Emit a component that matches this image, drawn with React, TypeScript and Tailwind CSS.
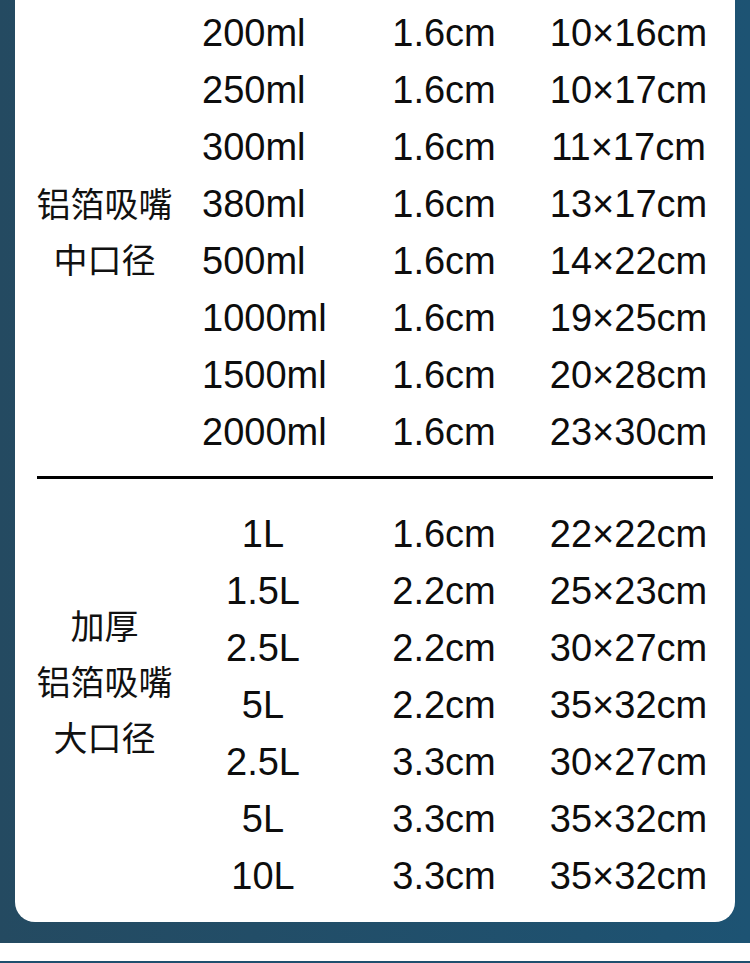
import React from "react";

const sec1 = [
  ["200ml", "1.6cm", "10×16cm"],
  ["250ml", "1.6cm", "10×17cm"],
  ["300ml", "1.6cm", "11×17cm"],
  ["380ml", "1.6cm", "13×17cm"],
  ["500ml", "1.6cm", "14×22cm"],
  ["1000ml", "1.6cm", "19×25cm"],
  ["1500ml", "1.6cm", "20×28cm"],
  ["2000ml", "1.6cm", "23×30cm"],
];

const sec2 = [
  ["1L", "1.6cm", "22×22cm"],
  ["1.5L", "2.2cm", "25×23cm"],
  ["2.5L", "2.2cm", "30×27cm"],
  ["5L", "2.2cm", "35×32cm"],
  ["2.5L", "3.3cm", "30×27cm"],
  ["5L", "3.3cm", "35×32cm"],
  ["10L", "3.3cm", "35×32cm"],
];

function Rows({ rows, firstLeft }: { rows: string[][]; firstLeft: boolean }) {
  return (
    <div className="flex flex-col">
      {rows.map((r, i) => (
        <div key={i} className="flex h-[57px] text-[38px] leading-[57px] text-[#0d0d0d] whitespace-nowrap">
          <div className={"ml-[30px] w-[122px] " + (firstLeft ? "text-left" : "text-center")}>{r[0]}</div>
          <div className="ml-[56px] w-[128px] text-center">{r[1]}</div>
          <div className="ml-[40px] w-[161px] text-center">{r[2]}</div>
        </div>
      ))}
    </div>
  );
}

export default function App() {
  return (
    <div
      className="w-[750px] h-[963px] flex flex-col bg-white overflow-hidden"
      style={{ fontFamily: '"Liberation Sans", Arial, "Noto Sans CJK SC", sans-serif' }}
    >
      <div className="bg-gradient-to-r from-[#244a61] to-[#1d5373] px-[15px] pb-[21px]">
        <div className="bg-white rounded-b-[20px] pt-[5px] pb-[17px] px-[22px]">
          <div className="flex">
            <div className="w-[135px] shrink-0 whitespace-nowrap flex flex-col items-center pt-[170px] text-[34px] leading-[56px] text-[#111]" style={{ fontFamily: '"Noto Sans CJK SC", sans-serif' }}>
              <div>铝箔吸嘴</div>
              <div>中口径</div>
            </div>
            <Rows rows={sec1} firstLeft={true} />
          </div>
          <div className="mt-[15px] h-[3px] bg-black" />
          <div className="flex mt-[27px]">
            <div className="w-[135px] shrink-0 whitespace-nowrap flex flex-col items-center pt-[91px] text-[34px] leading-[56px] text-[#111]" style={{ fontFamily: '"Noto Sans CJK SC", sans-serif' }}>
              <div>加厚</div>
              <div>铝箔吸嘴</div>
              <div>大口径</div>
            </div>
            <Rows rows={sec2} firstLeft={false} />
          </div>
        </div>
      </div>
      <div className="h-[18px] bg-white" />
      <div className="h-[2px] bg-[#1e4f6e]" />
    </div>
  );
}
